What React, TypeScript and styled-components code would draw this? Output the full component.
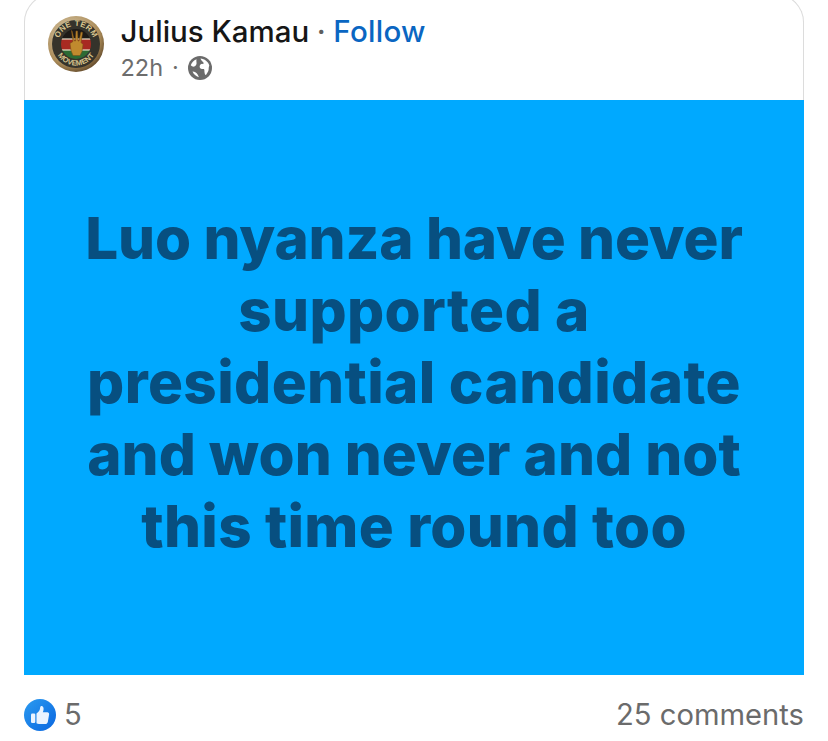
import React from "react";
import styled, { createGlobalStyle } from "styled-components";

const Global = createGlobalStyle`
  html, body { margin: 0; padding: 0; background: #fff; }
  body { font-family: Inter, "Liberation Sans", sans-serif; }
`;
const Page = styled.div`
  width: 828px; height: 741px; overflow: hidden; background: #fff;
  display: flex; flex-direction: column; align-items: center;
`;
const Card = styled.div`
  width: 780px; flex: none; margin-top: -6px; box-sizing: border-box;
  display: flex; flex-direction: column;
`;
const Header = styled.header`
  height: 106px; box-sizing: border-box; padding: 21px 0 0 23px;
  display: flex; gap: 16.500px; align-items: flex-start;
  border: 1.5px solid #dcdcdc; border-bottom: none; border-radius: 28px 28px 0 0;
`;
const Meta = styled.div`display: flex; flex-direction: column; margin-top: -3px;`;
const NameRow = styled.div`
  display: flex; align-items: center; gap: 7.500px;
  font-size: 29.500px; line-height: 36px; letter-spacing: 0;
  font-weight: 500; color: #161616;
`;
const Dot = styled.span`color: #5e5e5e; font-weight: 500;`;
const Follow = styled.span`color: #0a66c2; font-weight: 500; letter-spacing: 0.3px;`;
const SubRow = styled.div`
  display: flex; align-items: center; gap: 9px; margin-top: 4px;
  font-size: 23.500px; line-height: 30px; color: #6d6d6d;
`;
const Post = styled.main`
  height: 575px; background: #00a9ff; color: #074f80;
  display: flex; flex-direction: column; align-items: center; justify-content: center; text-align: center;
  font-size: 58.300px; line-height: 72px; font-weight: 800;
  padding-bottom: 11px; box-sizing: border-box;
`;
const Line = styled.div<{ $spacing: number }>`
  letter-spacing: ${(p) => p.$spacing}px;
`;
const Footer = styled.footer`
  display: flex; justify-content: space-between; align-items: center;
  height: 79px; font-size: 29.200px; color: #6b6b6b;
`;
const Likes = styled.div`display: flex; align-items: center; gap: 8px;`;

const Avatar = () => (
  <svg width="56" height="56" viewBox="0 0 56 56">
    <defs>
      <radialGradient id="rim" cx="40%" cy="35%" r="70%">
        <stop offset="0" stopColor="#e2d4b4" /><stop offset="0.75" stopColor="#a98a58" /><stop offset="1" stopColor="#5b4326" />
      </radialGradient>
      <path id="arcTop" d="M10 28a18 18 0 0 1 36 0" />
      <path id="arcBot" d="M6.500 28a21.500 21.500 0 0 0 43 0" />
      <clipPath id="flag"><circle cx="28" cy="28" r="15" /></clipPath>
    </defs>
    <circle cx="28" cy="28" r="28" fill="url(#rim)" />
    <circle cx="28" cy="28" r="24" fill="#35332b" />
    <text fontSize="8" fontWeight="700" fill="#d8c48e" fontFamily="Liberation Sans, sans-serif" letterSpacing="0.3">
      <textPath href="#arcTop" startOffset="50%" textAnchor="middle">ONE TERM</textPath>
    </text>
    <text fontSize="7.500" fontWeight="700" fill="#d8c48e" fontFamily="Liberation Sans, sans-serif">
      <textPath href="#arcBot" startOffset="50%" textAnchor="middle">MOVEMENT</textPath>
    </text>
    <g clipPath="url(#flag)">
      <rect x="8" y="13" width="40" height="10" fill="#1d1a17" />
      <rect x="8" y="23" width="40" height="11" fill="#a82a22" />
      <rect x="8" y="34" width="40" height="9" fill="#2c6b34" />
      <rect x="8" y="22.400" width="40" height="1.200" fill="#e8e0c8" />
      <rect x="8" y="33.400" width="40" height="1.200" fill="#e8e0c8" />
    </g>
    <path d="M24 15l2.500 10h1L28 15h1.500l.5 10h1l2-9 1.500.5-1.500 10 2 2-1 7-2 4h-7l-2-5-1-7 3-2-1.500-11z" fill="#c08a2e" stroke="#7c5317" strokeWidth=".6" />
  </svg>
);

const Globe = () => (
  <svg width="24" height="24" viewBox="0 0 24 24">
    <circle cx="12" cy="12" r="12" fill="#6b6b6b" />
    <path d="M12.500 2.500c4 .2 7.800 3.200 8.800 6.900-.7 1.500-.6 3.200-.7 4.600-.3 1.800-1.700 3.300-2.600 5.100-.9.200-1.300-1.400-1.500-2.800-.2-1.500.2-2.500-.6-3.300-1.300-.1-2.700.2-3.700-.8-.9-1.100-.6-2.700.3-3.700.9-.8 2.400-.5 3.400-1.300-.9-1.500-3.100-2.700-3.400-4.700z" fill="#fff" />
    <path d="M8.500 3.200c-2.800 1-5 3.400-5.700 6.100.8 1 2.400 1.600 3.500 1.200C7.600 10 9 8.200 8.500 6.500 8.300 5.500 8.400 4.500 8.500 3.200z" fill="#fff" />
    <path d="M4.500 15.500c1.100 2.700 3.500 4.900 6.300 5.700-.3-1.700-1.400-3.600-3-4.800-.9-.6-2.300-.9-3.300-.9z" fill="#fff" />
  </svg>
);

const LikeIcon = () => (
  <svg width="32" height="32" viewBox="0 0 32 32">
    <defs>
      <linearGradient id="lk" x1="0" y1="0" x2="1" y2="1">
        <stop offset="0" stopColor="#2b9bf0" /><stop offset="1" stopColor="#0a66e0" />
      </linearGradient>
    </defs>
    <circle cx="16" cy="16" r="16" fill="url(#lk)" />
    <rect x="7" y="14.500" width="4.300" height="9.500" rx="1.200" fill="#eaf3ff" />
    <path d="M12.500 14.500c2.200-1.500 3.500-3.400 3.600-5.400.1-1.400.7-2 1.500-2 1.300 0 2 1.400 2 3 0 1.200-.4 2.300-.8 3.200h4.500c1.300 0 2 1 1.800 2.100l-1.200 7c-.2 1.500-1.200 2.600-2.700 2.600H15c-1 0-1.800-.3-2.500-.8z" fill="#eaf3ff" />
  </svg>
);

const lines: [string, number][] = [
  ["Luo nyanza have never", -0.15],
  ["supported a", 0.35],
  ["presidential candidate", 0.4],
  ["and won never and not", 0.1],
  ["this time round too", 0.32],
];

export default function App() {
  return (
    <Page>
      <Global />
      <Card>
        <Header>
          <Avatar />
          <Meta>
            <NameRow>Julius Kamau <Dot>·</Dot> <Follow>Follow</Follow></NameRow>
            <SubRow>22h <span>·</span> <Globe /></SubRow>
          </Meta>
        </Header>
        <Post>
          {lines.map(([text, spacing]) => (
            <Line key={text} $spacing={spacing}>{text}</Line>
          ))}
        </Post>
        <Footer>
          <Likes><LikeIcon /> 5</Likes>
          <span>25 comments</span>
        </Footer>
      </Card>
    </Page>
  );
}
